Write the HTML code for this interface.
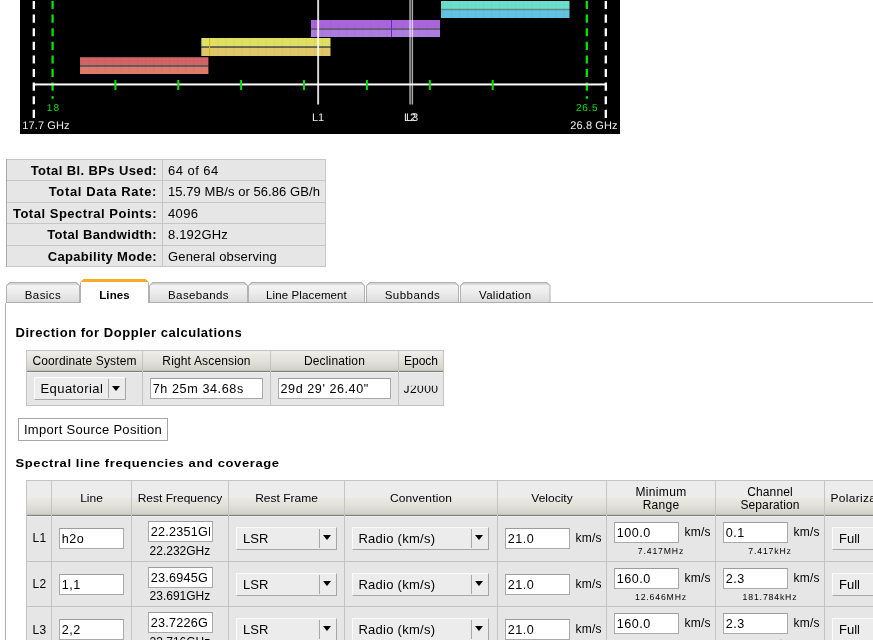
<!DOCTYPE html>
<html>
<head>
<meta charset="utf-8">
<title>Instrument Configuration</title>
<style>
html,body{margin:0;padding:0;background:#fff;}
body{width:873px;height:640px;overflow:hidden;position:relative;font-family:"Liberation Sans",sans-serif;font-size:13px;color:#000;}
.abs{position:absolute;}
svg{position:absolute;left:0;top:0;}
svg text{font-family:"Liberation Sans",sans-serif;text-rendering:geometricPrecision;}

/* summary table */
#sum{position:absolute;left:6px;top:159px;width:320px;height:108px;background:#c6c6c6;border-left:1px solid #ababab;box-sizing:border-box;}
#sum .r{position:absolute;left:0;height:20px;background:#e6e6e6;}
#sum .l{width:155px;}
#sum .v{left:156px;width:162px;}
#sum .l span{position:absolute;right:5px;top:3px;font-weight:bold;font-size:13px;white-space:nowrap;letter-spacing:.33px;}
#sum .v span{position:absolute;left:5px;top:3px;font-size:13px;white-space:nowrap;letter-spacing:.07px;}

/* tabs */
.tab{position:absolute;top:282px;height:20px;box-sizing:border-box;background:#b2b2b2;font-size:11.5px;text-align:center;line-height:27px;white-space:nowrap;
 clip-path:polygon(0 3.5px,3.5px 0,calc(100% - 3.5px) 0,100% 3.5px,100% 100%,0 100%);}
.tab:before{content:"";position:absolute;left:1px;right:1px;top:1px;bottom:0;background:linear-gradient(#cfcfcf 0,#dcdcdc 1.5px,#f3f3f3 2.5px,#ededed 9px,#dcdcdc 19px);
 clip-path:polygon(0 3px,3px 0,calc(100% - 3px) 0,100% 3px,100% 100%,0 100%);}
.tab span{position:relative;}
.tab.act{top:279px;height:24px;background:linear-gradient(#f7a928 0,#f7a928 4px,#b2b2b2 4px);font-weight:bold;line-height:33.5px;z-index:3;}
.tab.act:before{top:3px;background:#fff;clip-path:none;}
#panel{position:absolute;left:6px;top:302px;width:900px;height:400px;border-top:1px solid #adadad;background:#fff;box-sizing:border-box;}
#panel:before{content:"";position:absolute;left:-1px;top:0;width:1px;height:400px;background:#b0b0b0;}

h3{position:absolute;margin:0;font-size:13px;font-weight:bold;white-space:nowrap;line-height:15px;}

.tbl{position:absolute;background:#c4c4c4;}
.cell{position:absolute;background:#e6e6e6;}
.hl{box-shadow:inset 0 1px 0 #f0f0f0;}
.hd{position:absolute;background:#ececec;font-size:12px;text-align:center;white-space:nowrap;overflow:hidden;}
.hd:before,.hd2:before{content:"";position:absolute;left:0;right:0;height:18px;bottom:0;background:linear-gradient(#eaeae3 0,#e3e3dc 6px,#d9d9d2 12px,#cfcfc8 16.4px,#8a8a86 17px,#727270 18px);}
.hd span{position:relative;}
.hd2{position:absolute;background:#ececec;font-size:12px;text-align:center;white-space:nowrap;overflow:hidden;}
.hd2 span{position:absolute;left:0;right:0;line-height:13px;}
.inp{position:absolute;box-sizing:border-box;background:#fff;border:1px solid #a9a9a9;border-top-color:#9c9c9c;font-size:12.6px;letter-spacing:.5px;line-height:21px;padding:0 2px 0 1.7px;white-space:nowrap;height:21px;}
.inp span{display:block;overflow:hidden;height:19px;}
.sel{position:absolute;box-sizing:border-box;background:#ececec;border:1px solid;border-color:#fbfbfb #a6a6a6 #a6a6a6 #fbfbfb;font-size:13px;line-height:21px;padding-left:6px;white-space:nowrap;overflow:hidden;height:23px;}
.sel i{position:absolute;right:16px;top:1px;bottom:1px;width:1px;background:#a8a8a8;}
.sel b{position:absolute;right:4.9px;top:7px;width:0;height:0;border-left:4.55px solid transparent;border-right:4.55px solid transparent;border-top:5.4px solid #000;}
.t12{position:absolute;font-size:12px;white-space:nowrap;line-height:14px;}
.t10{position:absolute;font-size:8.7px;white-space:nowrap;line-height:12px;letter-spacing:.84px;text-rendering:geometricPrecision;margin-top:-.3px;text-align:center;}
.btn{position:absolute;box-sizing:border-box;background:#fff;border:1px solid #a6a6a6;font-size:13px;white-space:nowrap;text-align:center;}
</style>
</head>
<body>
<div id="w" style="position:absolute;left:0;top:0;width:873px;height:640px;will-change:transform;overflow:hidden">

<!-- frequency graphic -->
<svg width="873" height="140" viewBox="0 0 873 140">
 <defs><pattern id="sb" x="0" y="0" width="8.05" height="20" patternUnits="userSpaceOnUse"><rect x="0" y="0" width="1" height="20" fill="#000" fill-opacity=".035"/></pattern></defs>
 <rect x="20" y="0" width="600" height="134" fill="#000"/>
 <!-- dashed band edges -->
 <g stroke-width="2.3" stroke-dasharray="8.1 5.5" fill="none">
  <line x1="33.8" y1="1" x2="33.8" y2="118" stroke="#fff"/>
  <line x1="605.8" y1="1" x2="605.8" y2="118" stroke="#fff"/>
  <line x1="52.6" y1="1" x2="52.6" y2="98.8" stroke="#00e400"/>
  <line x1="586.8" y1="1" x2="586.8" y2="98.8" stroke="#00e400"/>
 </g>
 <!-- bars -->
 <g>
  <rect x="441" y="1" width="128.5" height="8" fill="#6ae0cc"/>
  <rect x="441" y="10" width="128.5" height="8" fill="#62c4e0"/>
  <rect x="441" y="8.8" width="128.5" height="1.4" fill="#62867f"/>

  <rect x="311" y="20" width="129" height="8.2" fill="#a966dc"/>
  <rect x="311" y="29.6" width="129" height="7.4" fill="#ad7ce0"/>
  <rect x="311" y="28.1" width="129" height="1.6" fill="#7a688a"/>
  <rect x="391" y="20" width="1" height="17" fill="#7a18d0"/>

  <rect x="201.3" y="38" width="129.2" height="8.3" fill="#e0e062"/>
  <rect x="201.3" y="47.7" width="129.2" height="8.3" fill="#e0c86a"/>
  <rect x="201.3" y="46.1" width="129.2" height="1.6" fill="#78765e"/>
  <rect x="209" y="38" width="1" height="18" fill="#d8c020"/>

  <rect x="80" y="57.2" width="128.4" height="8.3" fill="#d26464"/>
  <rect x="80" y="66.8" width="128.4" height="7.2" fill="#de7a68"/>
  <rect x="80" y="65.3" width="128.4" height="1.6" fill="#60686a"/>
  <g fill="url(#sb)">
   <rect x="441" y="1" width="128.5" height="17" transform="translate(0 0)"/>
   <rect x="311" y="20" width="129" height="17"/>
   <rect x="201.3" y="38" width="129.2" height="18"/>
   <rect x="80" y="57.2" width="128.4" height="16.8"/>
  </g>
 </g>
 <!-- axis -->
 <rect x="33" y="83.45" width="574" height="2" fill="#fff"/>
 <rect x="33" y="83" width="2" height="7" fill="#fff"/>
 <rect x="605" y="83" width="2" height="7" fill="#fff"/>
 <g fill="#00e000">
  <rect x="114.4" y="80" width="2" height="10"/>
  <rect x="177.3" y="80" width="2" height="10"/>
  <rect x="240.1" y="80" width="2" height="10"/>
  <rect x="303" y="80" width="2" height="10"/>
  <rect x="365.9" y="80" width="2" height="10"/>
  <rect x="428.8" y="80" width="2" height="10"/>
  <rect x="491.7" y="80" width="2" height="10"/>
 </g>
 <!-- line markers -->
 <g fill="#fff">
  <rect x="317.2" y="0" width="1.9" height="104.5" fill-opacity=".86"/>
  <rect x="409.3" y="0" width="1.5" height="104.5" fill-opacity=".66"/>
  <rect x="411.6" y="0" width="1.5" height="104.5" fill-opacity=".66"/>
 </g>
 <g fill="#ececec" font-size="11">
  <text x="318" y="121" text-anchor="middle">L1</text>
  <text x="410" y="121" text-anchor="middle">L2</text>
  <text x="412" y="121" text-anchor="middle">L3</text>
  <text x="22.3" y="128.9" letter-spacing=".12">17.7 GHz</text>
  <text x="570.3" y="128.9" letter-spacing=".12">26.8 GHz</text>
 </g>
 <g fill="#00e400" font-size="10">
  <text x="53.4" y="111" text-anchor="middle" letter-spacing="1">18</text>
  <text x="587.2" y="111" text-anchor="middle" letter-spacing=".7">26.5</text>
 </g>
</svg>

<!-- summary table -->
<div id="sum">
 <div class="r l" style="top:1px"><span style="letter-spacing:.39px">Total Bl. BPs Used:</span></div><div class="r v" style="top:1px"><span style="letter-spacing:.47px">64 of 64</span></div>
 <div class="r l" style="top:22px;height:21px"><span style="letter-spacing:.64px">Total Data Rate:</span></div><div class="r v" style="top:22px;height:21px"><span>15.79 MB/s or 56.86 GB/h</span></div>
 <div class="r l" style="top:44px;height:20px"><span style="letter-spacing:.52px">Total Spectral Points:</span></div><div class="r v" style="top:44px;height:20px"><span style="letter-spacing:.37px">4096</span></div>
 <div class="r l" style="top:65px;height:21px"><span>Total Bandwidth:</span></div><div class="r v" style="top:65px;height:21px"><span style="letter-spacing:.17px">8.192GHz</span></div>
 <div class="r l" style="top:87px;height:20px"><span>Capability Mode:</span></div><div class="r v" style="top:87px;height:20px"><span style="letter-spacing:.16px">General observing</span></div>
</div>

<!-- tabs -->
<div id="panel"></div>
<div class="tab" style="left:6px;width:74px"><span style="letter-spacing:0.45px">Basics</span></div>
<div class="tab act" style="left:80px;width:69px"><span style="letter-spacing:0.09px">Lines</span></div>
<div class="tab" style="left:149px;width:99px"><span style="letter-spacing:0.36px">Basebands</span></div>
<div class="tab" style="left:248px;width:117px"><span style="letter-spacing:.11px">Line Placement</span></div>
<div class="tab" style="left:366px;width:93px"><span style="letter-spacing:0.49px">Subbands</span></div>
<div class="tab" style="left:460px;width:90.5px"><span style="letter-spacing:0.27px">Validation</span></div>

<h3 style="left:16px;top:325px;left:15.5px;letter-spacing:.53px">Direction for Doppler calculations</h3>

<!-- doppler table -->
<div class="tbl" style="left:26px;top:350px;width:418px;height:56px">
 <div class="hd" style="left:1px;top:1px;width:115px;height:21px;line-height:21px;letter-spacing:.12px"><span>Coordinate System</span></div>
 <div class="hd" style="left:117px;top:1px;width:127px;height:21px;line-height:21px;letter-spacing:.15px"><span>Right Ascension</span></div>
 <div class="hd" style="left:245px;top:1px;width:127px;height:21px;line-height:21px;letter-spacing:.15px"><span>Declination</span></div>
 <div class="hd" style="left:373px;top:1px;width:44px;height:21px;line-height:21px"><span>Epoch</span></div>
 <div class="cell hl" style="left:1px;top:22px;width:115px;height:33px"></div>
 <div class="cell hl" style="left:117px;top:22px;width:127px;height:33px"></div>
 <div class="cell hl" style="left:245px;top:22px;width:127px;height:33px"></div>
 <div class="cell hl" style="left:373px;top:22px;width:44px;height:33px"></div>
</div>
<div class="sel" style="left:34px;top:377px;width:91.5px;height:22.5px;line-height:22px;letter-spacing:.42px;padding-left:5.5px">Equatorial<i style="right:16px"></i><b style="right:4.7px;top:8px"></b></div>
<div class="inp" style="left:150px;top:378px;width:113px;height:21px;line-height:21px;letter-spacing:.6px"><span>7h 25m 34.68s</span></div>
<div class="inp" style="left:278px;top:378px;width:113px;height:21px;line-height:21px;letter-spacing:.56px;padding-left:1.5px"><span>29d 29' 26.40"</span></div>
<div class="abs" style="left:403px;top:385px;width:40px;height:12px;clip-path:inset(.8px 0 0 0);font-size:12px;line-height:14px;letter-spacing:.45px"><span style="position:absolute;top:-3.3px;left:.5px">J2000</span></div>

<div class="btn" style="left:18px;top:418px;width:150px;height:23px;line-height:22px;letter-spacing:.3px">Import Source Position</div>

<h3 style="left:15.5px;top:456px;letter-spacing:.6px;transform:scaleY(.86);transform-origin:0 5.4px">Spectral line frequencies and coverage</h3>

<!-- lines table -->
<div class="tbl" style="left:26px;top:480px;width:860px;height:170px">
 <div class="hd2" style="left:1px;top:1px;width:24px;height:35px"></div>
 <div class="hd2" style="left:26px;top:1px;width:79px;height:35px"><span style="transform:scaleY(.87);transform-origin:0 10.1px;top:11px">Line</span></div>
 <div class="hd2" style="left:106px;top:1px;width:96px;height:35px"><span style="transform:scaleY(.87);transform-origin:0 10.1px;top:11px">Rest Frequency</span></div>
 <div class="hd2" style="left:203px;top:1px;width:115px;height:35px"><span style="transform:scaleY(.87);transform-origin:0 10.1px;top:11px">Rest Frame</span></div>
 <div class="hd2" style="left:319px;top:1px;width:152px;height:35px"><span style="transform:scaleY(.87);transform-origin:0 10.1px;top:11px;letter-spacing:.15px">Convention</span></div>
 <div class="hd2" style="left:472px;top:1px;width:108px;height:35px"><span style="transform:scaleY(.87);transform-origin:0 10.1px;top:11px">Velocity</span></div>
 <div class="hd2" style="left:581px;top:1px;width:108px;height:35px"><span style="top:5px"><span style="position:static;letter-spacing:.35px">Minimum</span><br><span style="position:static;letter-spacing:.25px">Range</span></span></div>
 <div class="hd2" style="left:690px;top:1px;width:108px;height:35px"><span style="top:5px;letter-spacing:.12px">Channel<br>Separation</span></div>
 <div class="hd2" style="left:799px;top:1px;width:75px;height:35px"><span style="transform:scaleY(.87);transform-origin:0 10.1px;top:11px;left:5.5px;letter-spacing:.3px;text-align:left">Polarization</span></div>
</div>
<div id="rows">
<div class="cell hl" style="left:27.0px;top:516.0px;width:24.0px;height:45.0px"></div>
<div class="cell hl" style="left:52.0px;top:516.0px;width:79.0px;height:45.0px"></div>
<div class="cell hl" style="left:132.0px;top:516.0px;width:96.0px;height:45.0px"></div>
<div class="cell hl" style="left:229.0px;top:516.0px;width:115.0px;height:45.0px"></div>
<div class="cell hl" style="left:345.0px;top:516.0px;width:152.0px;height:45.0px"></div>
<div class="cell hl" style="left:498.0px;top:516.0px;width:108.0px;height:45.0px"></div>
<div class="cell hl" style="left:607.0px;top:516.0px;width:108.0px;height:45.0px"></div>
<div class="cell hl" style="left:716.0px;top:516.0px;width:108.0px;height:45.0px"></div>
<div class="cell hl" style="left:825.0px;top:516.0px;width:75.0px;height:45.0px"></div>
<div class="t12" style="left:32.5px;top:531.2px;letter-spacing:.4px">L1</div>
<div class="inp" style="left:59px;top:528.0px;width:65px"><span>h2o</span></div>
<div class="inp" style="left:148px;top:521.0px;width:65px;letter-spacing:.25px"><span>22.2351GHz</span></div>
<div class="t12" style="left:131.4px;width:97px;text-align:center;top:543.7px">22.232GHz</div>
<div class="sel" style="left:236px;top:527.0px;width:101px">LSR<i></i><b></b></div>
<div class="sel" style="left:352px;top:527.0px;width:137px;letter-spacing:.27px;padding-left:5.4px">Radio (km/s)<i></i><b></b></div>
<div class="inp" style="left:505px;top:528.0px;width:65px"><span>21.0</span></div>
<div class="t12" style="left:575.5px;top:531.0px;letter-spacing:.2px">km/s</div>
<div class="inp" style="left:614px;top:522.0px;width:65px"><span>100.0</span></div>
<div class="t12" style="left:684.5px;top:525.0px;letter-spacing:.2px">km/s</div>
<div class="t10" style="left:611px;width:100px;top:545.5px">7.417MHz</div>
<div class="inp" style="left:723px;top:522.0px;width:65px"><span>0.1</span></div>
<div class="t12" style="left:793.5px;top:525.0px;letter-spacing:.2px">km/s</div>
<div class="t10" style="left:720px;width:100px;top:545.5px">7.417kHz</div>
<div class="sel" style="left:832px;top:527.0px;width:60px">Full</div>
<div class="cell" style="left:27.0px;top:562.0px;width:24.0px;height:44.0px"></div>
<div class="cell" style="left:52.0px;top:562.0px;width:79.0px;height:44.0px"></div>
<div class="cell" style="left:132.0px;top:562.0px;width:96.0px;height:44.0px"></div>
<div class="cell" style="left:229.0px;top:562.0px;width:115.0px;height:44.0px"></div>
<div class="cell" style="left:345.0px;top:562.0px;width:152.0px;height:44.0px"></div>
<div class="cell" style="left:498.0px;top:562.0px;width:108.0px;height:44.0px"></div>
<div class="cell" style="left:607.0px;top:562.0px;width:108.0px;height:44.0px"></div>
<div class="cell" style="left:716.0px;top:562.0px;width:108.0px;height:44.0px"></div>
<div class="cell" style="left:825.0px;top:562.0px;width:75.0px;height:44.0px"></div>
<div class="t12" style="left:32.5px;top:576.9px;letter-spacing:.4px">L2</div>
<div class="inp" style="left:59px;top:573.7px;width:65px"><span>1,1</span></div>
<div class="inp" style="left:148px;top:566.7px;width:65px;letter-spacing:.25px"><span>23.6945G</span></div>
<div class="t12" style="left:131.4px;width:97px;text-align:center;top:589.4px">23.691GHz</div>
<div class="sel" style="left:236px;top:572.7px;width:101px">LSR<i></i><b></b></div>
<div class="sel" style="left:352px;top:572.7px;width:137px;letter-spacing:.27px;padding-left:5.4px">Radio (km/s)<i></i><b></b></div>
<div class="inp" style="left:505px;top:573.7px;width:65px"><span>21.0</span></div>
<div class="t12" style="left:575.5px;top:576.7px;letter-spacing:.2px">km/s</div>
<div class="inp" style="left:614px;top:567.7px;width:65px"><span>160.0</span></div>
<div class="t12" style="left:684.5px;top:570.7px;letter-spacing:.2px">km/s</div>
<div class="t10" style="left:611px;width:100px;top:591.2px">12.646MHz</div>
<div class="inp" style="left:723px;top:567.7px;width:65px"><span>2.3</span></div>
<div class="t12" style="left:793.5px;top:570.7px;letter-spacing:.2px">km/s</div>
<div class="t10" style="left:720px;width:100px;top:591.2px">181.784kHz</div>
<div class="sel" style="left:832px;top:572.7px;width:60px">Full</div>
<div class="cell" style="left:27.0px;top:607.0px;width:24.0px;height:45.0px"></div>
<div class="cell" style="left:52.0px;top:607.0px;width:79.0px;height:45.0px"></div>
<div class="cell" style="left:132.0px;top:607.0px;width:96.0px;height:45.0px"></div>
<div class="cell" style="left:229.0px;top:607.0px;width:115.0px;height:45.0px"></div>
<div class="cell" style="left:345.0px;top:607.0px;width:152.0px;height:45.0px"></div>
<div class="cell" style="left:498.0px;top:607.0px;width:108.0px;height:45.0px"></div>
<div class="cell" style="left:607.0px;top:607.0px;width:108.0px;height:45.0px"></div>
<div class="cell" style="left:716.0px;top:607.0px;width:108.0px;height:45.0px"></div>
<div class="cell" style="left:825.0px;top:607.0px;width:75.0px;height:45.0px"></div>
<div class="t12" style="left:32.5px;top:622.5px;letter-spacing:.4px">L3</div>
<div class="inp" style="left:59px;top:619.3px;width:65px"><span>2,2</span></div>
<div class="inp" style="left:148px;top:612.3px;width:65px;letter-spacing:.25px"><span>23.7226G</span></div>
<div class="t12" style="left:131.4px;width:97px;text-align:center;top:635.0px">23.716GHz</div>
<div class="sel" style="left:236px;top:618.3px;width:101px">LSR<i></i><b></b></div>
<div class="sel" style="left:352px;top:618.3px;width:137px;letter-spacing:.27px;padding-left:5.4px">Radio (km/s)<i></i><b></b></div>
<div class="inp" style="left:505px;top:619.3px;width:65px"><span>21.0</span></div>
<div class="t12" style="left:575.5px;top:622.3px;letter-spacing:.2px">km/s</div>
<div class="inp" style="left:614px;top:613.3px;width:65px"><span>160.0</span></div>
<div class="t12" style="left:684.5px;top:616.3px;letter-spacing:.2px">km/s</div>
<div class="t10" style="left:611px;width:100px;top:636.8px">12.661MHz</div>
<div class="inp" style="left:723px;top:613.3px;width:65px"><span>2.3</span></div>
<div class="t12" style="left:793.5px;top:616.3px;letter-spacing:.2px">km/s</div>
<div class="t10" style="left:720px;width:100px;top:636.8px">182.000kHz</div>
<div class="sel" style="left:832px;top:618.3px;width:60px">Full</div>
</div><!--endrows-->

</div>
</body>
</html>
